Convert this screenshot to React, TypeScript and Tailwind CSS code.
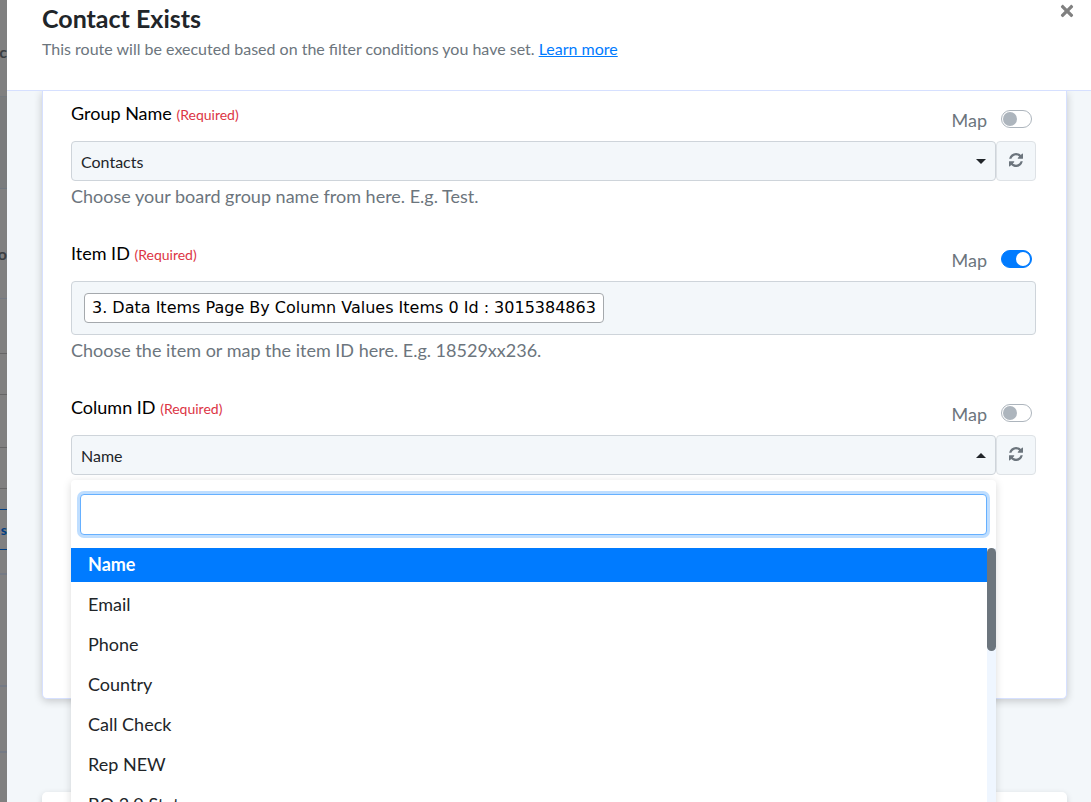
import { useState } from 'react';
import type { ReactNode } from 'react';
import { FaTimes } from 'react-icons/fa';

const columns = ['Name', 'Email', 'Phone', 'Country', 'Call Check', 'Rep NEW', 'BO 2.0 Status'];

function RefreshIcon() {
    return (
        <svg className="size-[14px]" viewBox="0 0 1536 1536" fill="currentColor">
            <path d="M1511 928q0 5-1 7-64 268-268 434.500t-478 166.500q-146 0-282.500-55t-243.500-157l-129 129q-19 19-45 19t-45-19-19-45v-448q0-26 19-45t45-19h448q26 0 45 19t19 45-19 45l-137 137q71 66 161 102t187 36q134 0 250-65t186-179q11-17 53-117 8-23 30-23h192q13 0 22.500 9.500t9.500 22.500z" />
            <path d="M1536 128v448q0 26-19 45t-45 19h-448q-26 0-45-19t-19-45 19-45l138-138q-148-137-349-137-134 0-250 65t-186 179q-11 17-53 117-8 23-30 23h-199q-13 0-22.500-9.500t-9.500-22.500v-7q65-268 270-434.500t480-166.500q146 0 284 55.500t245 156.500l130-129q19-19 45-19t45 19 19 45z" />
        </svg>
    );
}

function MapToggle({ id, defaultChecked = false }: { id: string; defaultChecked?: boolean }) {
    return (
        <div className="flex items-center gap-[14px] pt-1 pr-1">
            <label htmlFor={id} className="pt-[2px] text-lg leading-6 text-[#6c757d]">Map</label>
            <input
                id={id}
                type="checkbox"
                role="switch"
                defaultChecked={defaultChecked}
                className="h-[18px] w-[31px] appearance-none rounded-full border border-[#adb5bd] bg-white p-px before:block before:size-[14px] before:rounded-full before:bg-[#adb5bd] checked:border-[#007bff] checked:bg-[#007bff] checked:before:ml-[13px] checked:before:bg-white"
            />
        </div>
    );
}

function FieldHeader({ id, label, mapped }: { id: string; label: string; mapped?: boolean }) {
    return (
        <div className="flex h-[39px] items-start justify-between">
            <label id={`${id}-label`} htmlFor={id} className="text-lg leading-[22px] text-black">
                {label} <span className="text-sm text-[#dc3545]">(Required)</span>
            </label>
            <MapToggle id={`${id}-map`} defaultChecked={mapped} />
        </div>
    );
}

function SelectRow({ id, value, open, children }: { id: string; value: string; open?: boolean; children?: ReactNode }) {
    return (
        <div className="flex">
            <div className="relative flex-1">
                <select
                    id={id}
                    defaultValue={value}
                    className="h-10 w-full appearance-none rounded border border-[#ced4da] bg-[#f3f7fa] px-[9px] pt-[2px] text-base text-[#212529]"
                >
                    <option>{value}</option>
                </select>
                <svg className="pointer-events-none absolute top-[18px] right-[10px] h-[5px] w-[10px]" viewBox="0 0 10 5" fill="#212529">
                    <path d={open ? 'M0 5L5 0L10 5Z' : 'M0 0L5 5L10 0Z'} />
                </svg>
                {children}
            </div>
            <button aria-label="Refresh" className="flex h-10 w-10 items-center justify-center rounded border border-[#dee2e6] bg-[#f3f7fa] pb-[2px] text-[#6c757d]">
                <RefreshIcon />
            </button>
        </div>
    );
}

function ColumnDropdown() {
    const [selected, setSelected] = useState('Name');

    return (
        <div className="absolute inset-x-0 top-[45px] z-10 rounded bg-white shadow-[0_2px_8px_rgba(0,0,0,0.15)]">
            <div className="px-[9px] pt-[14px] pb-[13px]">
                <input
                    type="text"
                    aria-label="Search columns"
                    className="block h-[41px] w-full rounded border border-[#66b0ff] bg-white px-3 ring-3 ring-[#bfdeff] outline-none"
                />
            </div>
            <div className="flex">
                <ul role="listbox" aria-label="Columns" className="flex-1 space-y-[6px]">
                    {columns.map((column) => (
                        <li
                            key={column}
                            role="option"
                            aria-selected={column === selected}
                            onClick={() => setSelected(column)}
                            className="h-[34px] px-[17px] text-lg leading-8 text-[#212529] aria-selected:bg-[#007bff] aria-selected:font-bold aria-selected:text-white"
                        >
                            {column}
                        </li>
                    ))}
                </ul>
                <div className="w-[9px] bg-[#eff6ff]">
                    <div className="h-[103px] rounded-full bg-[#6c757d]" />
                </div>
            </div>
        </div>
    );
}

export default function App() {
    return (
        <div className="flex h-screen overflow-hidden bg-[#808080] font-[Lato,sans-serif]">
            {/* edge of the page behind the panel */}
            <aside className="w-[7px] shrink-0 overflow-hidden text-base font-bold text-[#3a3e42]">
                <div className="flex h-[97px] items-center justify-end border-b border-[#747a80] pt-2">c</div>
                <div className="h-[92px] border-b border-[#6f7780] bg-[#7a7c7d]" />
                <div className="flex h-[110px] items-center justify-end border-b border-[#747a84] pt-5">o</div>
                <div className="h-[55px] border-b border-[#666]" />
                <div className="h-[41px] border-b border-[#666]" />
                <div className="h-[53px] border-b border-[#666]" />
                <div className="h-[41px] border-b border-[#666]" />
                <div className="mt-5 flex h-[41px] items-center justify-end border-y border-[#003e80] text-sm text-[#003e80]">s</div>
                <div className="h-[25px] border-b-2 border-[#747a84]" />
                <div className="h-[112px] border-b-2 border-[#747a84]" />
                <div className="h-[66px] border-b-2 border-[#747a84]" />
            </aside>

            <main className="flex min-w-0 flex-1 flex-col bg-[#f3f7fa]">
                <header className="flex h-[91px] shrink-0 items-start justify-between border-b border-[#d6e0ff] bg-white pr-[15px] pl-[35px]">
                    <div className="pt-[2px]">
                        <h1 className="text-[25px] leading-8 font-bold text-[#212529]">Contact Exists</h1>
                        <p className="pt-[3px] text-base text-[#6c757d]">
                            This route will be executed based on the filter conditions you have set.{' '}
                            <a href="#" className="text-[#007bff] underline">Learn more</a>
                        </p>
                    </div>
                    <button aria-label="Close" className="pt-[2px] text-[#808080]">
                        <FaTimes size={18} />
                    </button>
                </header>

                <div className="min-h-0 flex-1 overflow-hidden pr-6 pl-[35px]">
                    <section className="h-[608px] rounded-b-[5px] border border-t-0 border-[#d6e0ff] bg-white pt-[11px] pr-[30px] pl-7 shadow-[0_2px_8px_rgba(0,0,0,0.2)]">
                        <div className="h-[140px]">
                            <FieldHeader id="group" label="Group Name" />
                            <SelectRow id="group" value="Contacts" />
                            <p className="pt-[3px] text-lg leading-6 text-[#6c757d]">Choose your board group name from here. E.g. Test.</p>
                        </div>
                        <div className="h-[154px]">
                            <FieldHeader id="item" label="Item ID" mapped />
                            <div
                                id="item"
                                role="textbox"
                                tabIndex={0}
                                aria-labelledby="item-label"
                                className="flex h-[54px] items-center rounded border border-[#ced4da] bg-[#f3f7fa] px-3"
                            >
                                <span className="rounded border border-[#a5a9ad] bg-white px-[7px] py-[2px] font-['DejaVu_Sans',sans-serif] text-base leading-6 text-black">
                                    3. Data Items Page By Column Values Items 0 Id : 3015384863
                                </span>
                            </div>
                            <p className="pt-[3px] text-lg leading-6 text-[#6c757d]">Choose the item or map the item ID here. E.g. 18529xx236.</p>
                        </div>
                        <FieldHeader id="column" label="Column ID" />
                        <SelectRow id="column" value="Name" open>
                            <ColumnDropdown />
                        </SelectRow>
                    </section>
                    <section className="mt-[93px] h-20 rounded-t-[5px] bg-white shadow-[0_2px_6px_rgba(0,0,0,0.15)]" />
                </div>
            </main>
        </div>
    );
}
